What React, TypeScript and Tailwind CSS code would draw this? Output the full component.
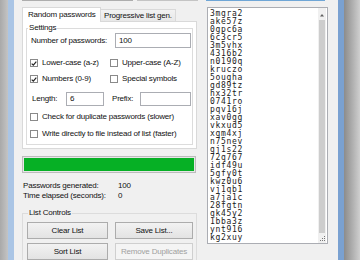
import React from "react";

const passwords = [
  "3mgra2", "ake57z", "0gpc6a", "6c3cr5", "3m5vhx", "4316b2", "n0190q", "kruczo",
  "5ougha", "gd89tz", "hx32tr", "0741ro", "pqv16j", "xav0gg", "vkxud5", "xgm4xj",
  "n75nev", "gj1s22", "72q767", "idf49u", "5gfy0t", "kwz0u6", "vj1qb1", "a7ja1c",
  "28fqtn", "qk45y2", "1bba3z", "ynt916", "kg2xuy",
];

function CheckBox({ checked }: { checked?: boolean }) {
  return (
    <span className="w-[8px] h-[8px] border border-[#8a8a8a] bg-white flex items-center justify-center shrink-0">
      {checked && (
        <svg width="7" height="7" viewBox="0 0 7 7">
          <path d="M0.8 3.6 L2.7 5.4 L6.2 1.2" fill="none" stroke="#222" strokeWidth="1.4" />
        </svg>
      )}
    </span>
  );
}

function Check({ label, checked }: { label: string; checked?: boolean }) {
  return (
    <div className="flex items-center h-[10px]">
      <CheckBox checked={checked} />
      <span className="ml-[4px] whitespace-nowrap">{label}</span>
    </div>
  );
}

function Button({ label, width, disabled }: { label: string; width: string; disabled?: boolean }) {
  return (
    <div
      className={`${width} h-[17px] border flex items-center justify-center bg-gradient-to-b ${
        disabled
          ? "border-[#cfcfcf] from-[#f4f4f4] to-[#f4f4f4] text-[#a0a0a0]"
          : "border-[#acacac] from-[#f2f2f2] to-[#e3e3e3] text-[#111]"
      }`}
    >
      {label}
    </div>
  );
}

export default function App() {
  return (
    <div
      className="w-[360px] h-[260px] flex overflow-hidden text-[8px] tracking-[-0.2px] text-[#111]"
      style={{ fontFamily: '"Liberation Sans", Arial, sans-serif' }}
    >
      {/* desktop + window frame (left) */}
      <div className="w-[8px] bg-gradient-to-r from-[#a9a9a9] to-[#c4c4c4]" />
      <div className="w-[6px] bg-[#aac5e5]" />

      {/* window body */}
      <div className="w-[324px] bg-[#f0f0f0] flex flex-col">
        {/* top buttons (cut off) */}
        <div className="flex h-[10px] pl-[8px]">
          <div className="w-[111px] border-x border-b border-[#adadad] bg-gradient-to-b from-[#f0f0f0] to-[#e6e6e6]" />
          <div className="w-[61px] ml-[4px] border-x border-b border-[#c4c4c4] bg-[#e9e9e9]" />
          <div className="w-[119px] ml-[8px] border-x border-b border-[#6fa6d6] bg-[#e3eff9]" />
        </div>

        <div className="flex mt-[6px]">
          {/* left column */}
          <div className="ml-[8px] w-[175px] flex flex-col">
            {/* tabs */}
            <div className="flex items-end h-[14px]">
              <div className="relative z-10 w-[79px] h-[15px] -mb-px border-x border-t border-[#d9d9d9] bg-white flex items-center pl-[5px] whitespace-nowrap">
                Random passwords
              </div>
              <div className="w-[75px] h-[12px] border-r border-t border-[#d9d9d9] bg-gradient-to-b from-[#f2f2f2] to-[#e8e8e8] flex items-center pl-[3px] whitespace-nowrap">
                Progressive list gen.
              </div>
            </div>

            {/* tab panel */}
            <div className="h-[128px] border border-[#d9d9d9] bg-white pt-[1px] px-[3px]">
              <fieldset className="border border-[#dcdcdc] pl-[3px] pr-[1px] pb-[6px] h-[122px]">
                <legend className="px-[1px] ml-[-2px] leading-[10px]">Settings</legend>

                <div className="flex items-center h-[15px]">
                  <span className="w-[85px] pl-[1px] whitespace-nowrap">Number of passwords:</span>
                  <div className="w-[76px] h-[15px] border border-[#abadb3] flex items-center pl-[3px]">100</div>
                </div>

                <div className="flex mt-[10px]">
                  <div className="w-[80px]"><Check label="Lower-case (a-z)" checked /></div>
                  <Check label="Upper-case (A-Z)" />
                </div>
                <div className="flex mt-[6px]">
                  <div className="w-[80px]"><Check label="Numbers (0-9)" checked /></div>
                  <Check label="Special symbols" />
                </div>

                <div className="flex items-center h-[14px] mt-[8px]">
                  <span className="w-[34px] ml-[2px]">Length:</span>
                  <div className="w-[38px] h-[14px] border border-[#abadb3] flex items-center pl-[3px]">6</div>
                  <span className="w-[28px] ml-[8px]">Prefix:</span>
                  <div className="w-[51px] h-[14px] border border-[#abadb3]" />
                </div>

                <div className="mt-[6px]"><Check label="Check for duplicate passwords (slower)" /></div>
                <div className="mt-[7px]"><Check label="Write directly to file instead of list (faster)" /></div>
              </fieldset>
            </div>

            {/* progress bar */}
            <div className="mt-[7px] w-[174px] h-[17px] border border-[#bcbcbc] bg-[#e6e6e6] p-px">
              <div className="h-full w-full bg-[#06b025]" />
            </div>

            {/* stats */}
            <div className="mt-[8px] flex flex-col pl-px">
              <div className="flex h-[10px] items-center">
                <span className="w-[95px]">Passwords generated:</span>
                <span>100</span>
              </div>
              <div className="flex h-[10px] items-center">
                <span className="w-[95px]">Time elapsed (seconds):</span>
                <span>0</span>
              </div>
            </div>

            {/* list controls */}
            <fieldset className="mt-[7px] border border-[#dcdcdc] pl-[4px] pb-[4px]">
              <legend className="px-[1px] ml-[1px] leading-[10px]">List Controls</legend>
              <div className="flex mt-[4px]">
                <Button label="Clear List" width="w-[81px]" />
                <div className="ml-[7px]"><Button label="Save List..." width="w-[78px]" /></div>
              </div>
              <div className="flex mt-[4px]">
                <Button label="Sort List" width="w-[81px]" />
                <div className="ml-[7px]"><Button label="Remove Duplicates" width="w-[78px]" disabled /></div>
              </div>
            </fieldset>
          </div>

          {/* password list */}
          <div className="ml-[10px] w-[121px] h-[237px] border border-[#abadb3] bg-white flex">
            <div
              className="flex-1 pl-[2px] pt-[2px] text-[8px] leading-[8px] tracking-[0.7px] text-[#1a1a1a]"
              style={{ fontFamily: '"DejaVu Sans Mono", "Liberation Mono", monospace' }}
            >
              {passwords.map((p) => (
                <div key={p} className="h-[8px]">{p}</div>
              ))}
            </div>
            <div className="w-[8px] mr-px flex flex-col items-center bg-[#f0f0f0]">
              <svg width="6" height="6" viewBox="0 0 6 6" className="mt-[4px]">
                <path d="M1 4.5 L3 2 L5 4.5 Z" fill="#606060" />
              </svg>
              <div className="mt-[2px] w-[6px] flex-1 bg-[#cdcdcd]" />
              <svg width="7" height="7" viewBox="0 0 7 7" className="mt-[2px] mb-[1px]">
                <rect x="5" y="1" width="1" height="1" fill="#777" />
                <rect x="3" y="3" width="1" height="1" fill="#777" />
                <rect x="5" y="3" width="1" height="1" fill="#777" />
                <rect x="1" y="5" width="1" height="1" fill="#777" />
                <rect x="3" y="5" width="1" height="1" fill="#777" />
                <rect x="5" y="5" width="1" height="1" fill="#777" />
              </svg>
            </div>
          </div>
        </div>
      </div>

      {/* window frame (right) + desktop shadow */}
      <div className="w-[6px] bg-[#7aa1d1]" />
      <div className="w-[16px] bg-gradient-to-r from-[#8c8c8c] to-[#cfcfcf]" />
    </div>
  );
}
